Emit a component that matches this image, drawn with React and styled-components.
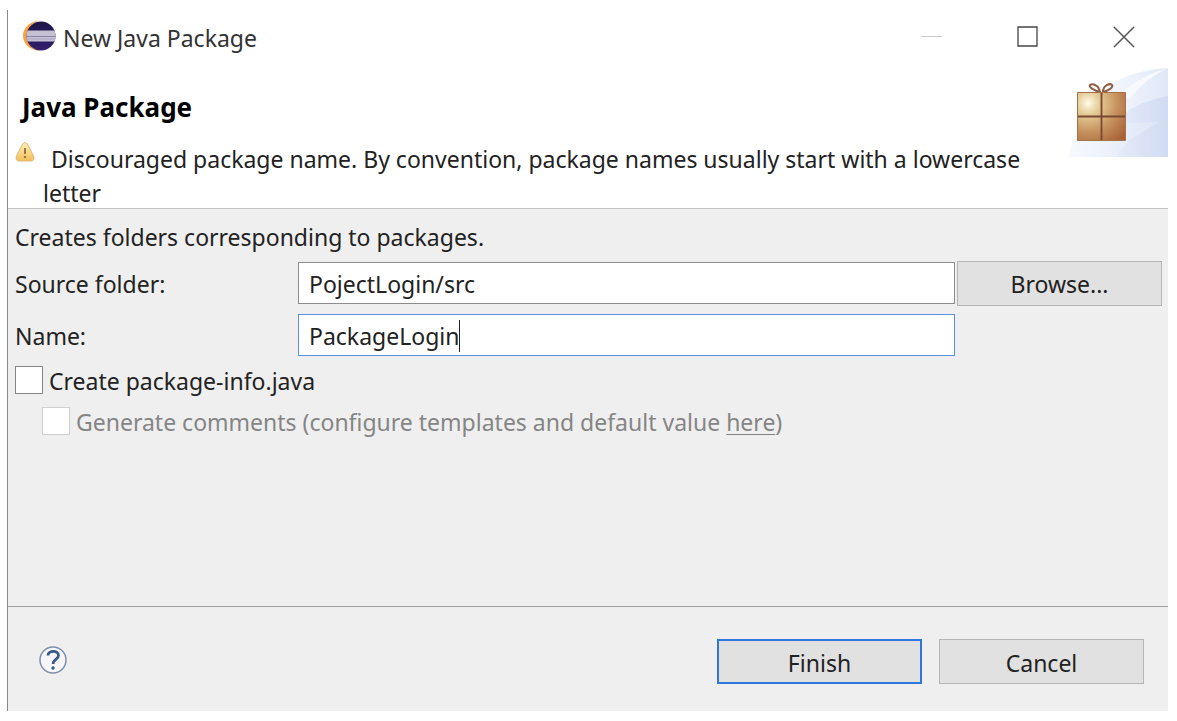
import React, { useState } from 'react';
import styled, { createGlobalStyle } from 'styled-components';

const App = () => {
    const [source, setSource] = useState('PojectLogin/src');
    const [name, setName] = useState('PackageLogin');

    return (
        <Dialog>
            <GlobalStyle />
            <TitleBar>
                <EclipseLogo />
                <WindowTitle>New Java Package</WindowTitle>
                <WindowButton type="button" aria-label="Minimize" disabled>
                    <svg width="22" height="22"><path d="M0 10.5h21" stroke="#c9c9c9" /></svg>
                </WindowButton>
                <WindowButton type="button" aria-label="Maximize">
                    <svg width="22" height="22" fill="none"><path d="M1 1h19v19H1z" stroke="#444" strokeWidth="1.3" /></svg>
                </WindowButton>
                <WindowButton type="button" aria-label="Close">
                    <svg width="22" height="22"><path d="M1 1l20 20M21 1L1 21" stroke="#555" strokeWidth="1.5" /></svg>
                </WindowButton>
            </TitleBar>

            <Header>
                <HeaderText>
                    <Heading>Java Package</Heading>
                    <Message>
                        <WarningIcon />
                        <MessageText>
                            Discouraged package name. By convention, package names usually start with a lowercase letter
                        </MessageText>
                    </Message>
                </HeaderText>
                <PackageBanner />
            </Header>

            <Body>
                <Description>Creates folders corresponding to packages.</Description>
                <Fields>
                    <FieldLabel htmlFor="source">Source folder:</FieldLabel>
                    <TextInput id="source" value={source} onChange={(e) => setSource(e.target.value)} />
                    <PushButton type="button">Browse...</PushButton>
                    <FieldLabel htmlFor="name">Name:</FieldLabel>
                    <InputWrapper>
                        <TextInput id="name" $active value={name} onChange={(e) => setName(e.target.value)} />
                        <Caret />
                    </InputWrapper>
                </Fields>
                <CheckRow>
                    <Checkbox id="info" type="checkbox" />
                    <FieldLabel htmlFor="info">Create package-info.java</FieldLabel>
                </CheckRow>
                <CheckRow $nested>
                    <Checkbox id="comments" type="checkbox" disabled />
                    <FieldLabel htmlFor="comments">
                        Generate comments (configure templates and default value <Link href="#templates">here</Link>)
                    </FieldLabel>
                </CheckRow>
            </Body>

            <Footer>
                <HelpButton type="button" aria-label="Help"><HelpIcon /></HelpButton>
                <PushButton type="button" $primary>Finish</PushButton>
                <PushButton type="button">Cancel</PushButton>
            </Footer>
        </Dialog>
    );
};

export default App;

const EclipseLogo = () => (
    <svg width="33" height="32" viewBox="0 0 33 32">
        <defs>
            <clipPath id="globe"><circle cx="18" cy="15" r="14.500" /></clipPath>
            <linearGradient id="night" x1="0" y1="0" x2="0" y2="1">
                <stop offset="0" stopColor="#1d1449" />
                <stop offset="1" stopColor="#35216f" />
            </linearGradient>
        </defs>
        <path d="M15 0C6 1 0 7 0 15S7 29 17 30C9 27 5 21 5 15S8 3 15 0z" fill="#f6a247" />
        <g clipPath="url(#globe)">
            <path d="M3 0h30v32H3z" fill="url(#night)" />
            <path d="M2 9.500h31v11H2z" fill="#c5c1d3" />
            <path d="M2 15.500h31" stroke="#8c84a8" strokeWidth="1" />
            <path d="M2 18h31" stroke="#aea9c4" strokeWidth="1" />
        </g>
    </svg>
);

const WarningIcon = () => (
    <svg width="20" height="20" viewBox="0 0 20 20">
        <defs>
            <linearGradient id="amber" x1="0" y1="0" x2="0" y2="1">
                <stop offset="0" stopColor="#fff0b8" />
                <stop offset="1" stopColor="#f3bf5c" />
            </linearGradient>
        </defs>
        <path d="M7.500 2q2.500-3 5 0l6 12q1.500 5-2.500 5H4q-4 0-2.500-5z" fill="url(#amber)" stroke="#e2b777" />
        <path d="M10 6v6M10 14v2" stroke="#7a5a28" strokeWidth="1.500" />
    </svg>
);

const PackageBanner = () => (
    <svg width="100" height="90" viewBox="0 0 100 90">
        <defs>
            <linearGradient id="sky" x1="0" y1="0" x2="1" y2="0">
                <stop offset="0" stopColor="#fafbff" />
                <stop offset="0.550" stopColor="#f0f4fc" />
                <stop offset="1" stopColor="#dfe7f7" />
            </linearGradient>
            <linearGradient id="skyDeep" x1="0" y1="0" x2="1" y2="0">
                <stop offset="0" stopColor="#edf2fb" />
                <stop offset="1" stopColor="#d0dbf3" />
            </linearGradient>
            <linearGradient id="skyLight" x1="0" y1="0" x2="1" y2="0">
                <stop offset="0" stopColor="#f7f9fe" />
                <stop offset="1" stopColor="#dde6f7" />
            </linearGradient>
            <radialGradient id="box" cx="0.220" cy="0.220" r="1">
                <stop offset="0" stopColor="#fffbea" />
                <stop offset="0.240" stopColor="#e5cb95" />
                <stop offset="0.600" stopColor="#c6935f" />
                <stop offset="1" stopColor="#a96136" />
            </radialGradient>
        </defs>
        <path d="M1 89Q10 6 100 0v89z" fill="url(#sky)" />
        <path d="M50 27Q75 6 100 0Q75 12 62 31z" fill="#f7f9fe" />
        <path d="M52 48Q72 33 100 28v61H30z" fill="url(#skyDeep)" />
        <path d="M1 89l4-17 52-17 34-1-30 18-14 17z" fill="url(#skyLight)" />
        <path
            d="M32 24C27 23 20 19 22 17s9 0 10 7zM35 24c5-1 11-5 9-7s-9 0-9 7z"
            fill="#fff" stroke="#8f6047" strokeWidth="2"
        />
        <path d="M9.500 24.500h48v48h-48z" fill="url(#box)" stroke="#a4714b" />
        <path d="M10 48.500h47M33.500 25v47" stroke="#794832" strokeWidth="1.800" />
    </svg>
);

const HelpIcon = () => (
    <svg width="28" height="28" viewBox="0 0 28 28" fill="none">
        <circle cx="14" cy="14" r="13" fill="#f6f6f8" stroke="#7f8fad" strokeWidth="1.500" />
        <path d="M9 9.500C9 4 19.500 4 19.500 9.500c0 4-5.500 4-5.500 8.500" stroke="#3c5a88" strokeWidth="2.800" />
        <circle cx="14" cy="22" r="1.700" fill="#3c5a88" />
    </svg>
);

const GlobalStyle = createGlobalStyle`
    * {
        box-sizing: border-box;
    }

    body {
        margin: 10px 9px 10px 7px;
        background: #fff;
        color: #222;
        font: 23px/34px 'Noto Sans', sans-serif;
    }
`;

const Dialog = styled.main`
    display: flex;
    flex-direction: column;
    min-height: calc(100vh - 20px);
    border-left: 1px solid #8a8a8a;
    background: #efefef;
`;

const TitleBar = styled.div`
    display: flex;
    align-items: center;
    height: 58px;
    padding: 0 33px 4px 15px;
    background: #fff;
`;

const WindowTitle = styled.span`
    flex: 1;
    padding: 2px 0 0 7px;
    color: #333;
`;

const WindowButton = styled.button`
    display: flex;
    margin-left: 74px;
    padding: 0;
    border: 0;
    background: none;
`;

const Header = styled.header`
    display: flex;
    justify-content: space-between;
    height: 141px;
    border-bottom: 1px solid #c3c3c3;
    background: #fff;
`;

const HeaderText = styled.div`
    flex: 1;
    padding: 22px 0 0 7px;
`;

const Heading = styled.h1`
    margin: 0 7px 18px;
    color: #000;
    font-size: 26px;
    line-height: 34px;
`;

const Message = styled.div`
    display: flex;
    gap: 8px;

    svg {
        flex: none;
    }
`;

const MessageText = styled.p`
    margin: 0;
    padding-right: 24px;
    text-indent: 8px;
`;

const Body = styled.section`
    flex: 1;
    padding: 11px 6px 0 7px;
`;

const Description = styled.p`
    margin: 0 0 7px;
`;

const Fields = styled.div`
    display: grid;
    grid-template-columns: 281px 1fr 205px;
    grid-template-rows: 44px 44px;
    gap: 8px 2px;
    align-items: center;
    margin-bottom: 2px;
`;

const FieldLabel = styled.label`
    padding-top: 2px;
`;

const InputWrapper = styled.div`
    position: relative;
`;

const TextInput = styled.input`
    display: block;
    width: 100%;
    height: 42px;
    padding: 2px 10px 0;
    border: 1px solid ${({ $active }) => ($active ? '#5b8fe0' : '#8c8c8c')};
    outline: 0;
    background: #fff;
    color: inherit;
    font: inherit;
`;

const Caret = styled.span`
    position: absolute;
    top: 6px;
    left: 161px;
    width: 1px;
    height: 32px;
    background: #222;
`;

const PushButton = styled.button`
    width: 205px;
    height: 45px;
    padding: 2px 0 0;
    border: ${({ $primary }) => ($primary ? '2px solid #2f77dc' : '1px solid #b5b5b5')};
    background: #e1e1e1;
    color: inherit;
    font: inherit;
    line-height: 34px;
`;

const CheckRow = styled.div`
    display: flex;
    align-items: center;
    gap: 6px;
    height: 41px;
    margin-left: ${({ $nested }) => ($nested ? '27px' : '0')};
    color: ${({ $nested }) => ($nested ? '#858585' : 'inherit')};
`;

const Checkbox = styled.input`
    appearance: none;
    width: 28px;
    height: 28px;
    margin: 0;
    border: 1px solid #858585;
    background: #fff;

    &:disabled {
        border-color: #d0d0d0;
    }
`;

const Link = styled.a`
    color: inherit;
    text-decoration-thickness: 1px;
    text-underline-offset: 3px;
`;

const Footer = styled.footer`
    display: flex;
    align-items: center;
    gap: 17px;
    height: 105px;
    padding: 5px 24px 0 31px;
    border-top: 1px solid #a0a0a0;
`;

const HelpButton = styled.button`
    display: flex;
    margin: 0 auto 4px 0;
    padding: 0;
    border: 0;
    background: none;
`;
